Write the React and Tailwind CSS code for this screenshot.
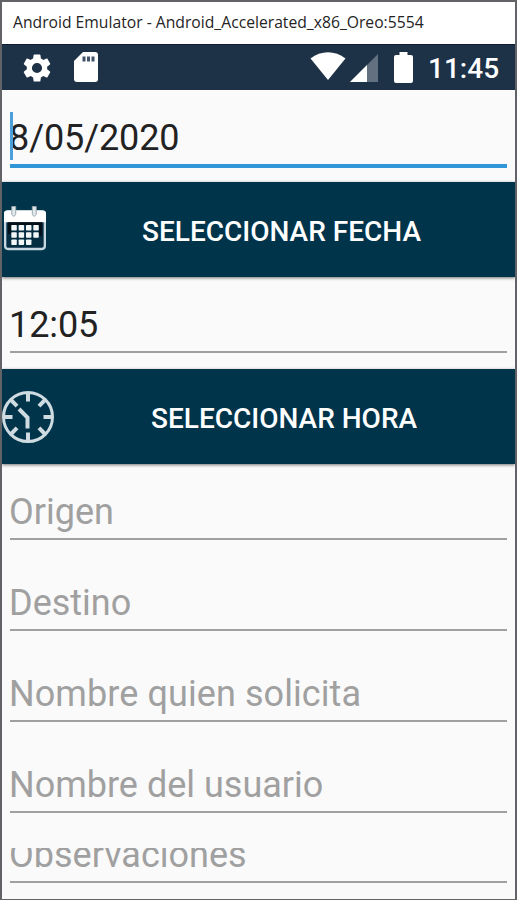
import React from "react";

function StatusBar() {
  return (
    <header className="flex h-[46px] shrink-0 items-center bg-[#1d3147] border-t border-[#101b33]">
      <svg className="ml-[18px] h-[34px] w-[34px]" viewBox="0 0 24 24" fill="#fff">
        <path d="M19.14 12.94c.04-.3.06-.61.06-.94s-.02-.64-.07-.94l2.03-1.58c.18-.14.23-.41.12-.61l-1.92-3.32c-.12-.22-.37-.29-.59-.22l-2.39.96c-.5-.38-1.03-.7-1.62-.94l-.36-2.54c-.04-.24-.24-.41-.48-.41h-3.84c-.24 0-.43.17-.47.41l-.36 2.54c-.59.24-1.13.57-1.62.94l-2.39-.96c-.22-.08-.47 0-.59.22L2.74 8.87c-.12.21-.08.47.12.61l2.03 1.58c-.05.3-.09.63-.09.94s.02.64.07.94l-2.03 1.58c-.18.14-.23.41-.12.61l1.92 3.32c.12.22.37.29.59.22l2.39-.96c.5.38 1.03.7 1.62.94l.36 2.54c.05.24.24.41.48.41h3.84c.24 0 .44-.17.47-.41l.36-2.54c.59-.24 1.13-.56 1.62-.94l2.39.96c.22.08.47 0 .59-.22l1.92-3.32c.12-.22.07-.47-.12-.61l-2.01-1.58zM12 15.6A3.6 3.6 0 1 1 12 8.4a3.6 3.6 0 0 1 0 7.2z" />
      </svg>
      <svg className="ml-[20px] mt-[-2px] h-[30px] w-[24px]" viewBox="0 0 24 30">
        <path d="M9 0H21Q24 0 24 3V27Q24 30 21 30H3Q0 30 0 27V9Z" fill="#fff" />
        <path d="M8.5 4.5h3v5h-3zM13 4.5h3v5h-3zM17.5 4.5h3v5h-3z" fill="#40536a" />
      </svg>
      <svg className="ml-auto mt-[-3px] h-[28px] w-[36px]" viewBox="0 0 36 28">
        <path d="M0.5 6.5C11-1.8 25-1.8 35.5 6.5L18 28Z" fill="#fff" />
      </svg>
      <svg className="ml-[4px] h-[28px] w-[28px]" viewBox="0 0 28 28">
        <path d="M0 28L28 0V28Z" fill="#62707f" />
        <path d="M0 28L17 11V28Z" fill="#fff" />
      </svg>
      <svg className="ml-[16px] h-[31px] w-[19px]" viewBox="0 0 19 31">
        <path d="M5.5 0h8v3H17q2 0 2 2v24q0 2-2 2H2q-2 0-2-2V5q0-2 2-2h3.5z" fill="#fff" />
      </svg>
      <span className="ml-[15px] mr-[17px] w-[70px] pt-[2px] text-[28px] font-medium leading-[46px] text-white">11:45</span>
    </header>
  );
}

function CalendarIcon() {
  const dots = [0, 1, 2, 3, 4, 5, 6, 7, 8, 9, 10];
  return (
    <svg className="mb-[4px] ml-[2px] h-[46px] w-[42px]" viewBox="0 0 43 46">
      <rect x="1.2" y="6" width="40.6" height="38.5" rx="3" fill="#052d42" stroke="#c6d7df" strokeWidth="2.4" />
      <path d="M0 17V8q0-3 3-3h37q3 0 3 3v9z" fill="#fff" />
      <path d="M4 17h35v14h-3V20H7v9H4z" fill="#020e18" />
      <path d="M8 1h4v8q-2 4-4 0zM29 1h4v8q-2 4-4 0z" fill="#e2e9ed" stroke="#9aa7ae" strokeWidth="1" />
      {dots.map((i) => (
        <rect key={i} x={7.5 + (i % 4) * 7.5} y={20 + Math.floor(i / 4) * 7.4} width="5.6" height="5.6" rx="0.8" fill="#f4f7f8" />
      ))}
    </svg>
  );
}

function ClockIcon() {
  const angles = [0, 45, 90, 135, 180, 225, 270, 315];
  return (
    <svg className="h-[54px] w-[54px]" viewBox="0 0 54 54" fill="none" stroke="#cedce2">
      <circle cx="26" cy="27" r="24.5" strokeWidth="3" />
      {angles.map((a) => (
        <path key={a} d="M26 3V11.5" strokeWidth="4" transform={`rotate(${a} 26 27)`} />
      ))}
      <path d="M17 19L25.5 27.5V38.5" strokeWidth="4" />
    </svg>
  );
}

function Action({ icon, label, textClass }) {
  return (
    <button className="relative z-10 flex h-[95px] w-full shrink-0 items-center bg-[#00344b] shadow-[0_1px_3px_rgba(0,0,0,0.55)]">
      <span className="flex w-[54px] shrink-0">{icon}</span>
      <span className={`whitespace-nowrap pt-[4px] text-[28px] font-medium leading-[40px] text-white ${textClass}`}>{label}</span>
    </button>
  );
}

function Field({ children, className, lineClass = "h-[2px] bg-[#a0a0a0]" }) {
  return (
    <div className={`flex shrink-0 flex-col justify-end px-2 text-[36px] ${className}`}>
      <div className="-ml-px h-[47px] whitespace-nowrap leading-[42px]">{children}</div>
      <div className={lineClass} />
    </div>
  );
}

export default function App() {
  return (
    <main className="flex h-[900px] w-[517px] flex-col overflow-hidden border-x-2 border-b border-t-2 border-[#626366] bg-[#fafafa] font-['Roboto',sans-serif]">
      <div className="h-[42px] shrink-0 whitespace-nowrap bg-white pl-[11px] font-['Open_Sans',sans-serif] text-[15.7px] leading-[40px] text-[#242424]">
        Android Emulator - Android_Accelerated_x86_Oreo:5554
      </div>
      <StatusBar />
      <Field className="h-[78px] tracking-[-0.1px] text-[#222]" lineClass="h-[4px] bg-[#3196d8]">
        <span className="relative">
          <i className="absolute -top-[5px] left-px h-[48px] w-[3px] bg-[#4b9fdb]" />
          8/05/2020
        </span>
      </Field>
      <div className="h-[14px] shrink-0" />
      <Action icon={<CalendarIcon />} label="SELECCIONAR FECHA" textClass="ml-[86px]" />
      <Field className="h-[76px] tracking-[-0.1px] text-[#222]">12:05</Field>
      <div className="h-[16px] shrink-0" />
      <Action icon={<ClockIcon />} label="SELECCIONAR HORA" textClass="ml-[95px]" />
      <Field className="h-[76px] text-[#a0a0a0]">Origen</Field>
      <Field className="h-[91px] text-[#a0a0a0]">Destino</Field>
      <Field className="h-[91px] tracking-[0.08px] text-[#a0a0a0]">Nombre quien solicita</Field>
      <Field className="h-[91px] text-[#a0a0a0]">Nombre del usuario</Field>
      <div className="h-[35px] shrink-0" />
      <div className="flex h-[35px] shrink-0 flex-col px-2 text-[36px] text-[#a0a0a0]">
        <div className="-ml-px flex h-[33px] items-end overflow-hidden">
          <span className="mb-[5px] leading-[42px]">Observaciones</span>
        </div>
        <div className="h-[2px] shrink-0 bg-[#a0a0a0]" />
      </div>
    </main>
  );
}
